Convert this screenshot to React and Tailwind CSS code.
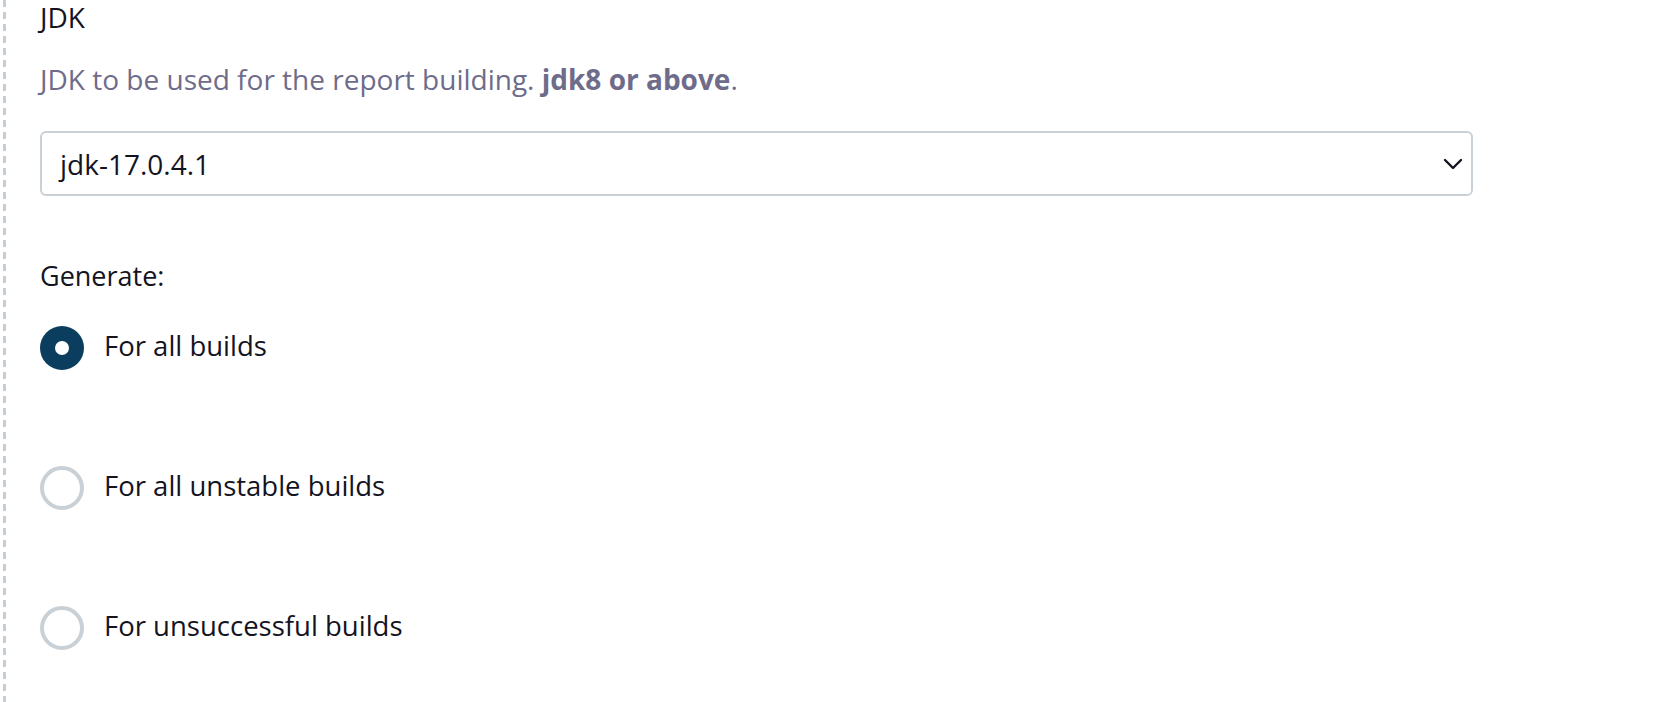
import React from "react";

function Radio({ checked, label }) {
  return (
    <div className="flex items-center h-[44px]">
      {checked ? (
        <div className="w-[44px] h-[44px] rounded-full bg-[#0b3d5e] flex items-center justify-center shrink-0">
          <div className="w-[14px] h-[14px] rounded-full bg-white" />
        </div>
      ) : (
        <div className="w-[44px] h-[44px] rounded-full border-4 border-[#c9d1d6] bg-white shrink-0" />
      )}
      <span className="ml-[20px] pb-[4px] text-[27.5px] leading-[34px] text-[#14141f]">{label}</span>
    </div>
  );
}

export default function App() {
  return (
    <div
      className="flex h-[702px] w-[1664px] overflow-hidden bg-white"
      style={{ fontFamily: '"Open Sans", "Noto Sans", sans-serif' }}
    >
      <div className="ml-[3px] w-[3px] h-full shrink-0 bg-[repeating-linear-gradient(to_bottom,#c5ced5_0px,#c5ced5_7px,transparent_7px,transparent_12px)]" />
      <div className="ml-[34px] flex flex-col w-[1433px]">
        <div className="text-[28px] leading-[34px] text-[#14141f]">JDK</div>
        <div className="mt-[28px] text-[28px] leading-[34px] text-[#6e6c8a]">
          JDK to be used for the report building. <b className="font-bold">jdk8 or above</b>.
        </div>
        <div className="mt-[35px] h-[65px] rounded-[6px] border-2 border-[#c9d1d6] flex items-center justify-between pl-[18px] pr-[8px]">
          <span className="text-[28px] leading-[34px] text-[#14141f]">jdk-17.0.4.1</span>
          <svg width="20" height="12" viewBox="0 0 20 12" fill="none">
            <path d="M2 2 L10 10 L18 2" stroke="#14141f" strokeWidth="2.4" strokeLinecap="round" strokeLinejoin="round" />
          </svg>
        </div>
        <div className="mt-[63px] text-[27px] leading-[34px] text-[#14141f]">Generate:</div>
        <div className="mt-[33px] flex flex-col gap-[96px]">
          <Radio checked label="For all builds" />
          <Radio label="For all unstable builds" />
          <Radio label="For unsuccessful builds" />
        </div>
      </div>
    </div>
  );
}
